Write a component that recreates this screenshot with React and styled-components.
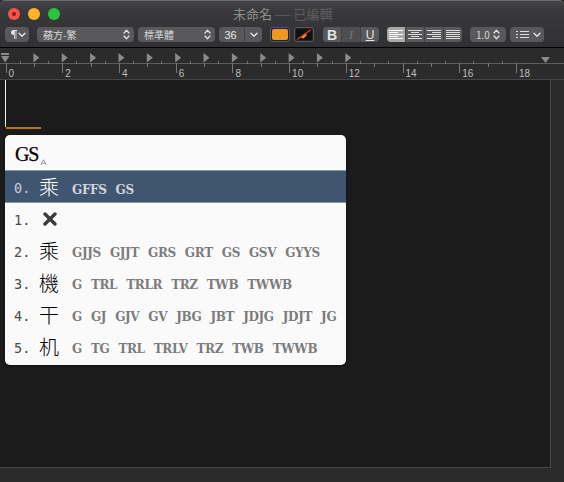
import React from "react";
import styled, { createGlobalStyle } from "styled-components";

const Global = createGlobalStyle`
  html, body { margin: 0; padding: 0; background: #2a2a2b; }
  body { width: 564px; height: 482px; overflow: hidden; font-family: "Liberation Sans", "Noto Sans CJK TC", sans-serif; }
`;
const Win = styled.div`
  width: 564px; height: 482px; display: flex; flex-direction: column; background: #2a2a2b; overflow: hidden;
`;
const Head = styled.div`
  height: 47px; box-sizing: border-box; flex: none; padding: 3px 0 0 5px;
  background: linear-gradient(#444446, #39393b 24%, #303032);
  border-top: 1px solid #6b6b6c; border-radius: 5px 5px 0 0;
  display: flex; flex-direction: column;
`;
const TitleBar = styled.div`
  height: 19px; position: relative; display: flex; align-items: center; gap: 8px; padding-left: 3px;
`;
const Light = styled.span`
  width: 12px; height: 12px; border-radius: 50%; background: ${p => p.$c}; display: flex; align-items: center; justify-content: center;
`;
const Dot = styled.span`
  width: 4px; height: 4px; border-radius: 50%; background: #8c1a14;
`;
const Title = styled.div`
  position: absolute; left: 228px; top: 1px; white-space: nowrap; font-size: 13px; line-height: 18px; color: #8e8e8f;
  font-family: "Noto Sans CJK TC", sans-serif;
  span { color: #5f5f61; }
  b { font-weight: 400; display: inline-block; transform: scaleX(1.5); margin: 0 2px; }
`;
const Tools = styled.div`
  display: flex; align-items: center; height: 15px; margin-top: 4px;
`;
const Ctl = styled.div`
  width: ${p => p.$w}px; margin-left: ${p => p.$ml || 0}px; height: 15px; box-sizing: border-box; flex: none;
  background: #59595b; border-radius: 4px; display: flex; align-items: center; color: #d6d6d6; overflow: hidden;
  font-size: 10px; font-family: "Noto Sans CJK TC", sans-serif; padding: 0 ${p => p.$pr ?? 4}px 0 ${p => p.$pl ?? 6}px;
  justify-content: space-between;
`;
const Seg = styled.div`
  flex: ${p => p.$fixed ? `0 0 ${p.$fixed}px` : 1}; height: 15px; display: flex; align-items: center; justify-content: center;
  box-sizing: border-box; padding-right: ${p => p.$fixed ? 2 : 0}px;
  background: ${p => p.$on ? "#a9a9aa" : p.$bg || "transparent"};
  border-left: ${p => p.$div ? "1px solid #414143" : "0"};
  color: ${p => p.$dim ? "#77777a" : "#e6e6e6"};
  font-family: ${p => p.$serif ? '"Liberation Serif", serif' : '"Liberation Sans", sans-serif'};
  font-size: ${p => p.$fs || 12}px; font-weight: ${p => p.$b ? 700 : 400}; font-style: ${p => p.$i ? "italic" : "normal"};
  text-decoration: ${p => p.$u ? "underline" : "none"};
`;
const SegGroup = styled(Ctl).attrs({ $pl: 0, $pr: 0 })``;
const Well = styled.div`
  width: ${p => p.$w}px; margin-left: ${p => p.$ml}px; height: 15px; box-sizing: border-box; flex: none; border-radius: 3px;
  background: #232325; border: 1px solid #57575a; padding: 1px; display: flex;
`;
const Swatch = styled.div`
  flex: 1; border-radius: 2px; background: ${p => p.$c}; display: flex; align-items: center; justify-content: center; overflow: hidden;
`;
const RulerBox = styled.div`
  height: 33px; flex: none; box-sizing: border-box; border-top: 1px solid #000; border-bottom: 1px solid #454547; background: #2b2b2c;
`;
const RulerSvg = styled.svg`
  display: block;
`;
const Body = styled.div`
  flex: 1; display: flex; align-items: flex-start; position: relative;
`;
const Page = styled.div`
  width: 551px; height: 388px; box-sizing: border-box; background: #1b1b1b; border-right: 1px solid #464648; border-bottom: 1px solid #464648; flex: none;
  padding-left: 5px; display: flex; flex-direction: column;
`;
const Caret = styled.div`
  width: 1px; height: 47px; background: #f0f0f0; flex: none;
`;
const Mark = styled.div`
  width: 35px; height: 2px; margin-left: 1px; background: #b3741c; flex: none;
`;
const Popup = styled.div`
  position: absolute; left: 5px; top: 55px; width: 341px; height: 230px; background: #fafafa; border-radius: 5px; overflow: hidden;
  display: flex; flex-direction: column; box-shadow: 0 1px 3px rgba(0,0,0,.4);
`;
const Input = styled.div`
  height: 35px; flex: none; padding: 6px 0 0 10px; display: flex; align-items: flex-start; box-sizing: border-box;
  color: #000; font: 400 20px/26px "Liberation Serif", serif; letter-spacing: -1.2px;
  -webkit-text-stroke: .25px #000;
`;
const Accent = styled.svg`
  display: block; flex: none; margin: 18px 0 0 2px;
`;
const Row = styled.div`
  height: ${p => p.$h || 32}px; flex: none; box-sizing: border-box; display: flex; align-items: center; padding-left: 9px;
  background: ${p => p.$sel ? "#405670" : "transparent"};
  border-top: ${p => p.$sel ? "1px solid #8b98a9" : "0"};
  border-bottom: ${p => p.$sel ? "1px solid #8b98a9" : "0"};
  color: ${p => p.$sel ? "#e6e9ee" : "#333"};
`;
const Idx = styled.span`
  width: 25px; flex: none; margin-top: 2px; font: 400 13.5px "DejaVu Sans Mono", monospace; color: ${p => p.$sel ? "#c4ccd6" : "#4a4a4a"}; letter-spacing: .1px;
`;
const Hz = styled.span`
  width: 33px; flex: none; font: 300 20px/28px "Noto Sans CJK TC", sans-serif; color: ${p => p.$sel ? "#ffffff" : "#000"};
  -webkit-font-smoothing: antialiased;
`;
const Codes = styled.span`
  display: flex; gap: 9px; margin-top: ${p => p.$sel ? 6 : 4}px; font: 700 12px "DejaVu Serif", serif; letter-spacing: -.35px; color: ${p => p.$sel ? "#cfd5dd" : "#7c7c7c"}; white-space: nowrap;
`;

const Updown = ({ c = "#e0e0e0" }) => (
  <svg width="7" height="11" viewBox="0 0 7 11" fill="none" stroke={c} strokeWidth="1.3" strokeLinecap="round" strokeLinejoin="round">
    <path d="M1 4 3.5 1.2 6 4M1 7l2.5 2.8L6 7" />
  </svg>
);
const Chev = () => (
  <svg width="8" height="6" viewBox="0 0 8 6" fill="none" stroke="#e4e4e4" strokeWidth="1.4" strokeLinecap="round" strokeLinejoin="round">
    <path d="M1 1.3 4 4.3 7 1.3" />
  </svg>
);
const Para = () => (
  <svg width="6" height="9" viewBox="0 0 6 9" fill="#e6e6e6">
    <path d="M2.5 0H6V1H5.4V9H4.6V1H3.8V9H3V5C1.2 5 0 4 0 2.5S1.1 0 2.5 0Z" />
  </svg>
);
const Align = ({ kind, c = "#dcdcdc" }) => {
  const ws = { left: [14, 9, 14, 9, 14], center: [14, 8, 14, 8, 14], right: [14, 9, 14, 9, 14], just: [14, 14, 14, 14, 14] }[kind];
  return (
    <svg width="14" height="9" viewBox="0 0 14 9" stroke={c} strokeWidth="1" style={{ flex: "none" }}>
      {ws.map((w, i) => {
        const x = kind === "right" ? 14 - w : kind === "center" ? (14 - w) / 2 : 0;
        return <path key={i} d={`M${x} ${i * 2 + 0.5}H${x + w}`} />;
      })}
    </svg>
  );
};
const ListIcon = () => (
  <svg width="13" height="8" viewBox="0 0 13 8" fill="none" stroke="#dcdcdc">
    {[0.5, 3.5, 6.5].map(y => <path key={y} d={`M0 ${y}H2M4 ${y}H13`} />)}
  </svg>
);

const Ruler = () => {
  const u = 28.36, x0 = 5.5;
  const xs = Array.from({ length: 37 }, (_, i) => i);
  return (
    <RulerSvg width="564" height="31" viewBox="0 0 564 31">
      <path d="M0 15.5H564" stroke="#5d5d5f" />
      {xs.map(i => {
        const x = Math.round(x0 + (i * u) / 2) + 0.5;
        if (i % 4 === 0) return <path key={i} d={`M${x} 15V25`} stroke="#77777a" />;
        if (i % 2 === 0) return <path key={i} d={`M${x} 15V19`} stroke="#77777a" />;
        return <path key={i} d={`M${x} 13V16`} stroke="#77777a" />;
      })}
      {xs.filter(i => i % 2 === 0 && i <= 24 && i > 0).map(i => {
        const x = x0 + (i * u) / 2 - 0.5;
        return <path key={i} d={`M${x} 5V14.5L${x + 6} 9.8Z`} fill="#8b8b8d" />;
      })}
      <path d="M1 5H9V7H1Z" fill="#8b8b8d" />
      <path d="M1 8H9.5L5.2 14.5Z" fill="#8b8b8d" />
      <path d="M541 9H550L545.5 15Z" fill="#8b8b8d" />
      {xs.filter(i => i % 4 === 0 && i <= 36).map(i => (
        <text key={i} x={x0 + (i * u) / 2 + 3} y="28.5" fontSize="10" fill="#bdbdbd" fontFamily="Liberation Sans, sans-serif">{i / 2}</text>
      ))}
    </RulerSvg>
  );
};

const rows = [
  { i: "1.", x: true, c: [] },
  { i: "2.", h: "乘", c: ["GJJS", "GJJT", "GRS", "GRT", "GS", "GSV", "GYYS"] },
  { i: "3.", h: "機", c: ["G", "TRL", "TRLR", "TRZ", "TWB", "TWWB"] },
  { i: "4.", h: "干", c: ["G", "GJ", "GJV", "GV", "JBG", "JBT", "JDJG", "JDJT", "JG"] },
  { i: "5.", h: "机", c: ["G", "TG", "TRL", "TRLV", "TRZ", "TWB", "TWWB"] },
];

export default function App() {
  return (
    <>
      <Global />
      <Win>
        <Head>
          <TitleBar>
            <Light $c="#f4544c"><Dot /></Light>
            <Light $c="#fdb42c" />
            <Light $c="#2ac33e" />
            <Title>未命名 <span><b>—</b> 已編輯</span></Title>
          </TitleBar>
          <Tools>
            <Ctl $w={24} $pl={6} $pr={3}><Para /><Chev /></Ctl>
            <Ctl $w={97} $ml={8}>蘋方-繁<Updown /></Ctl>
            <Ctl $w={77} $ml={4}>標準體<Updown /></Ctl>
            <SegGroup $w={43} $ml={4}>
              <Seg $fixed={25} $fs={11}>36</Seg>
              <Seg $div><Chev /></Seg>
            </SegGroup>
            <Well $w={20} $ml={8}><Swatch $c="#ee9a1f" /></Well>
            <Well $w={20} $ml={4}>
              <Swatch $c="#111">
                <svg width="16" height="11" viewBox="0 0 16 11" fill="none">
                  <path d="M5 8.5 9 4l2 2-3.5 3.5Z" fill="#e09a22" />
                  <path d="M1 10.5 15 .8" stroke="#e8392f" strokeWidth="1.2" />
                </svg>
              </Swatch>
            </Well>
            <SegGroup $w={56} $ml={9}>
              <Seg $b $fs={14}>B</Seg>
              <Seg $i $dim $div $serif $bg="#4e4e50" $fs={13}>I</Seg>
              <Seg $u $div>U</Seg>
            </SegGroup>
            <SegGroup $w={75} $ml={8}>
              <Seg $on><Align kind="left" c="#fff" /></Seg>
              <Seg $div><Align kind="center" /></Seg>
              <Seg $div><Align kind="right" /></Seg>
              <Seg $div><Align kind="just" /></Seg>
            </SegGroup>
            <Ctl $w={36} $ml={8} $pl={6} $pr={6}>1.0<Updown /></Ctl>
            <Ctl $w={34} $ml={4} $pl={6} $pr={3}><ListIcon /><Chev /></Ctl>
          </Tools>
        </Head>
        <RulerBox><Ruler /></RulerBox>
        <Body>
          <Page>
            <Caret />
            <Mark />
          </Page>
          <Popup>
            <Input>
              GS
              <Accent width="7" height="6" viewBox="0 0 7 6" fill="none" stroke="#999">
                <path d="M.8 6 3.5 .8 6.2 6M1.8 4.2H5.2" />
              </Accent>
            </Input>
            <Row $sel $h={33}>
              <Idx $sel>0.</Idx><Hz $sel>乘</Hz>
              <Codes $sel><span>GFFS</span><span>GS</span></Codes>
            </Row>
            {rows.map(r => (
              <Row key={r.i}>
                <Idx>{r.i}</Idx>
                <Hz>{r.x ? (
                  <svg width="14" height="14" viewBox="0 0 14 14" stroke="#3c3c3c" strokeWidth="3.4" strokeLinecap="round" style={{ marginLeft: 4, display: "block" }}>
                    <path d="M2 2 12 12M12 2 2 12" />
                  </svg>
                ) : r.h}</Hz>
                <Codes>{r.c.map(c => <span key={c}>{c}</span>)}</Codes>
              </Row>
            ))}
          </Popup>
        </Body>
      </Win>
    </>
  );
}
